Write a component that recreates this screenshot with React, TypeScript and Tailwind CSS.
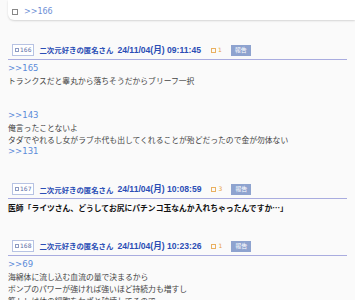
import React from "react";

const JP = { fontFamily: '"Noto Sans CJK JP", sans-serif' } as const;

function Header({ no, date, count }: { no: string; date: string; count: string }) {
  return (
    <div className="flex items-center h-[14px] pl-[4px] border-b border-[#a9acdf] pb-[2px] box-content">
      <span className="flex items-center h-[12px] px-[2px] border border-[#b7c3e3] bg-white text-[6px] text-[#5b6ea8] leading-none" style={{ fontFamily: '"DejaVu Sans", "Noto Sans CJK JP", sans-serif' }}>
        <span className="inline-block w-[4px] h-[4px] border border-[#8d9bc2] mr-[1px]" />
        {no}
      </span>
      <span className="ml-[5px] text-[7.4px] font-bold text-[#2b4db5] leading-none" style={JP}>二次元好きの匿名さん</span>
      <span className="ml-[4px] text-[8.6px] font-bold text-[#2b4db5] leading-none" style={{ fontFamily: '"Liberation Sans", "Noto Sans CJK JP", sans-serif' }}>{date}</span>
      <span className="ml-[10px] flex items-center text-[6px] text-[#e9a23c] leading-none" style={{ fontFamily: '"DejaVu Sans", sans-serif' }}>
        <span className="inline-block w-[5px] h-[5px] border border-[#e9b060] mr-[2px]" />
        {count}
      </span>
      <span className="ml-[9px] flex items-center justify-center w-[20px] h-[11px] bg-[#8ea3cf] text-white text-[6px] leading-none" style={JP}>報告</span>
    </div>
  );
}

function Link({ children }: { children: React.ReactNode }) {
  return <div className="text-[#5b8bd9]" style={{ fontFamily: '"DejaVu Sans", sans-serif', fontSize: "8.5px" }}>{children}</div>;
}

function Line({ children, bold }: { children?: React.ReactNode; bold?: boolean }) {
  return <div className={bold ? "font-bold text-[#111]" : "text-[#444]"} style={JP}>{children ?? "\u00a0"}</div>;
}

export default function App() {
  return (
    <div className="w-[355px] h-[300px] overflow-hidden bg-[#fafafa]">
      <div className="ml-[8px] h-[20px] bg-white rounded-bl-[6px] shadow-[0_1px_2px_rgba(0,0,0,0.15)] flex items-center pl-[4px] pt-[4px]">
        <span className="inline-block w-[6px] h-[6px] border border-[#888] mr-[6px]" />
        <span className="text-[#6e8fd6] text-[8px]" style={{ fontFamily: '"DejaVu Sans", sans-serif' }}>&gt;&gt;166</span>
      </div>

      <div className="px-[8px] pt-[23px] text-[7.8px] leading-[11.8px]">
        <Header no="166" date="24/11/04(月) 09:11:45" count="1" />
        <div className="pt-[3px]">
          <Link>&gt;&gt;165</Link>
          <Line>トランクスだと睾丸から落ちそうだからブリーフ一択</Line>
          <Line />
          <Line />
          <Link>&gt;&gt;143</Link>
          <Line>俺言ったことないよ</Line>
          <Line>タダでやれるし女がラブホ代も出してくれることが殆どだったので金が勿体ない</Line>
          <Link>&gt;&gt;131</Link>
        </div>

        <div className="mt-[25px]">
          <Header no="167" date="24/11/04(月) 10:08:59" count="3" />
          <div className="pt-[3px]">
            <Line bold>医師「ライツさん、どうしてお尻にパチンコ玉なんか入れちゃったんですか…」</Line>
          </div>
        </div>

        <div className="mt-[25px]">
          <Header no="168" date="24/11/04(月) 10:23:26" count="1" />
          <div className="pt-[3px]">
            <Link>&gt;&gt;69</Link>
            <Line>海綿体に流し込む血流の量で決まるから</Line>
            <Line>ポンプのパワーが強ければ強いほど持続力も増すし</Line>
            <Line>筋トレは体の細胞をわざと破壊してるので</Line>
          </div>
        </div>
      </div>
    </div>
  );
}
